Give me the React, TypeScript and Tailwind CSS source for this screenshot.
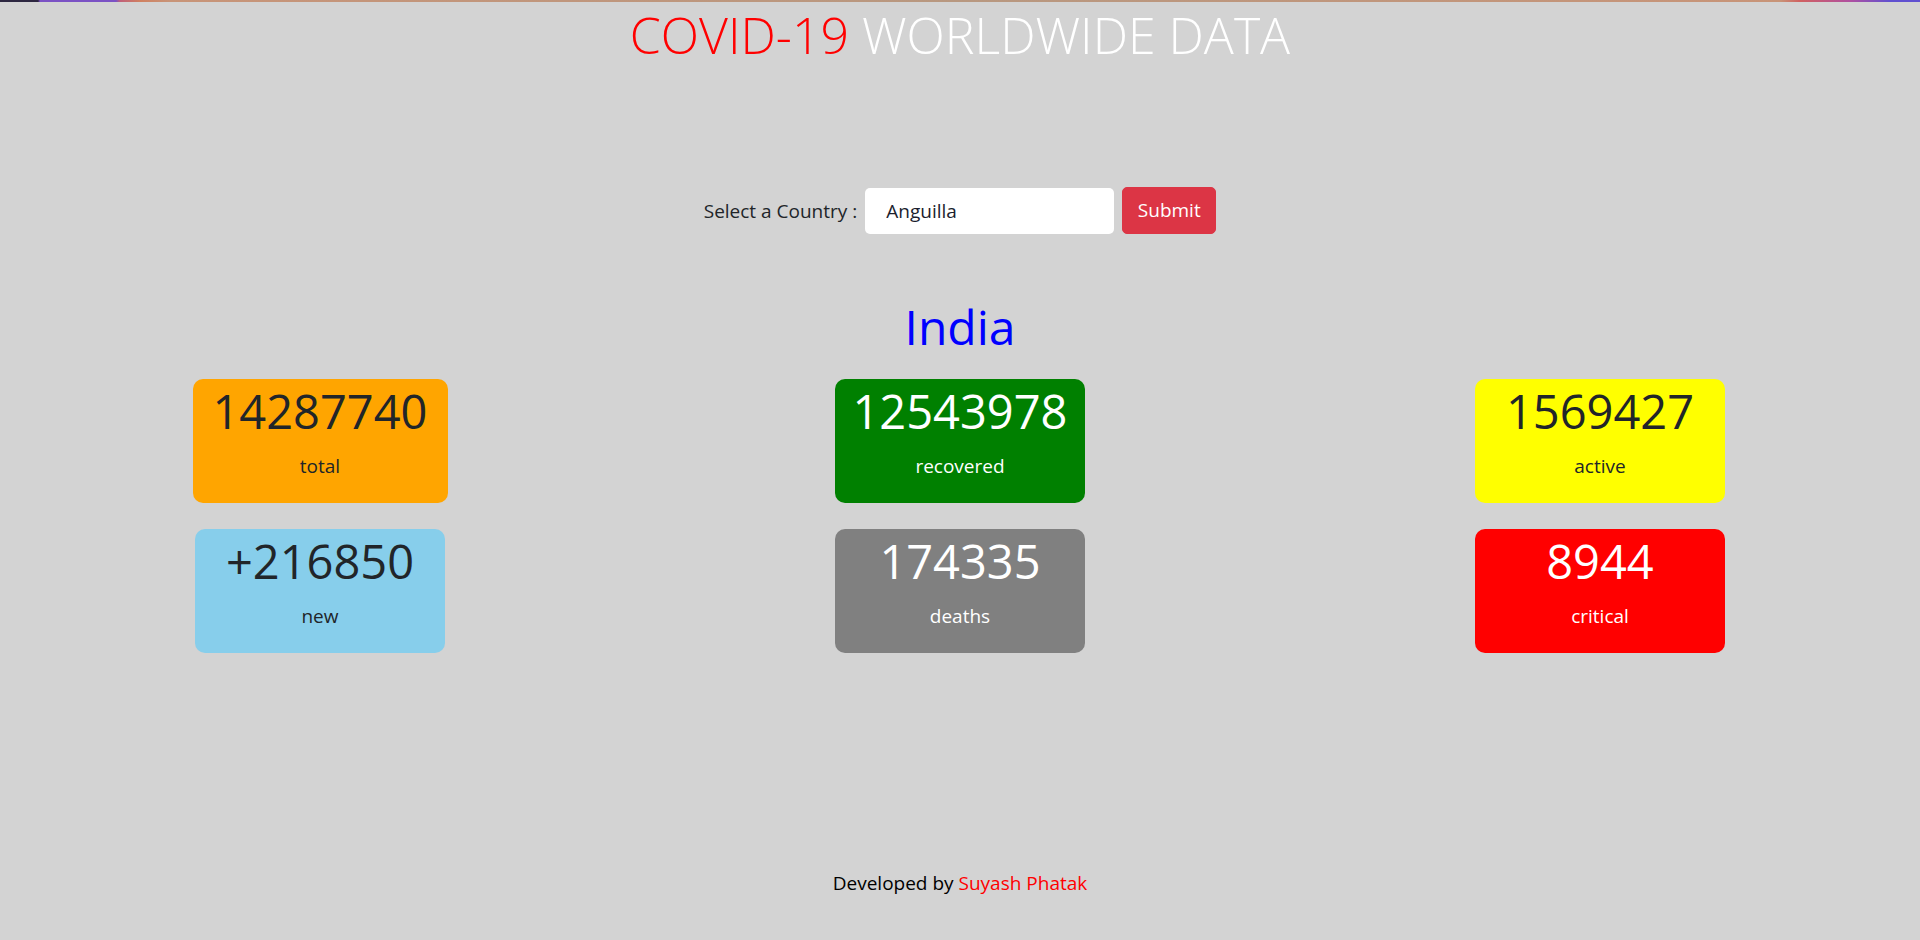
const STATS = [
    { value: "14287740", label: "total", card: "w-[255px] bg-[#ffa500] text-[#212529]" },
    { value: "12543978", label: "recovered", card: "w-[250px] bg-[#008000] text-white" },
    { value: "1569427", label: "active", card: "w-[250px] bg-[#ffff00] text-[#212529]" },
    { value: "+216850", label: "new", card: "w-[250px] bg-[#87ceeb] text-[#212529]" },
    { value: "174335", label: "deaths", card: "w-[250px] bg-[#808080] text-white" },
    { value: "8944", label: "critical", card: "w-[250px] bg-[#ff0000] text-white" },
]

const StatCard = ({ value, label, card }: { value: string; label: string; card: string }) => (
    <div className="flex justify-center">
        <div className={`flex h-[124px] flex-col items-center rounded-[10px] ${card}`}>
            <h2 className="pt-[2px] text-[47px] leading-[60px] font-normal">{value}</h2>
            <p className="mt-[10px] text-[19px] leading-[30px]">{label}</p>
        </div>
    </div>
)

const App = () => {
    return (
        <div className="flex min-h-screen flex-col bg-[#d3d3d3] font-['Open_Sans',sans-serif] text-[#212529]">
            <div className="h-[2px] w-full bg-[linear-gradient(to_right,#2d2640_0px,#2d2640_38px,#7b52c4_40px,#7b52c4_116px,#c0607a_120px,#d08060_140px,#c89478_170px,#b89880_50%,#c89478_1780px,#d06060_1800px,#b050a0_1850px,#6050d0_1890px)]" />

            <h1 className="text-center text-[50px] leading-[66px] font-light">
                <span className="text-[#ff0000]">COVID-19</span>{" "}
                <span className="text-white">WORLDWIDE DATA</span>
            </h1>

            <form className="mt-[119px] flex items-center justify-center" onSubmit={(e) => e.preventDefault()}>
                <label className="mr-[8px] text-[19px] leading-[30px]">Select a Country :</label>
                <input
                    className="h-[46px] w-[249px] rounded-[5px] bg-white pl-[21px] text-[19px] text-[#1b1e2e] outline-none"
                    defaultValue="Anguilla"
                />
                <button
                    type="submit"
                    className="ml-[8px] h-[47px] w-[94px] rounded-[5px] border border-[#dc3545] bg-[#dc3545] text-[19px] text-white"
                >
                    Submit
                </button>
            </form>

            <h2 className="mt-[63px] text-center text-[48px] leading-[60px] text-[#0000ff]">India</h2>

            <div className="mt-[22px] grid grid-cols-3 gap-y-[26px]">
                {STATS.map((stat) => (
                    <StatCard key={stat.label} {...stat} />
                ))}
            </div>

            <footer className="mt-auto pb-[42px] text-center text-[19px] leading-[30px] text-black">
                Developed by <span className="text-[#ff0000]">Suyash Phatak</span>
            </footer>
        </div>
    )
}

export default App
